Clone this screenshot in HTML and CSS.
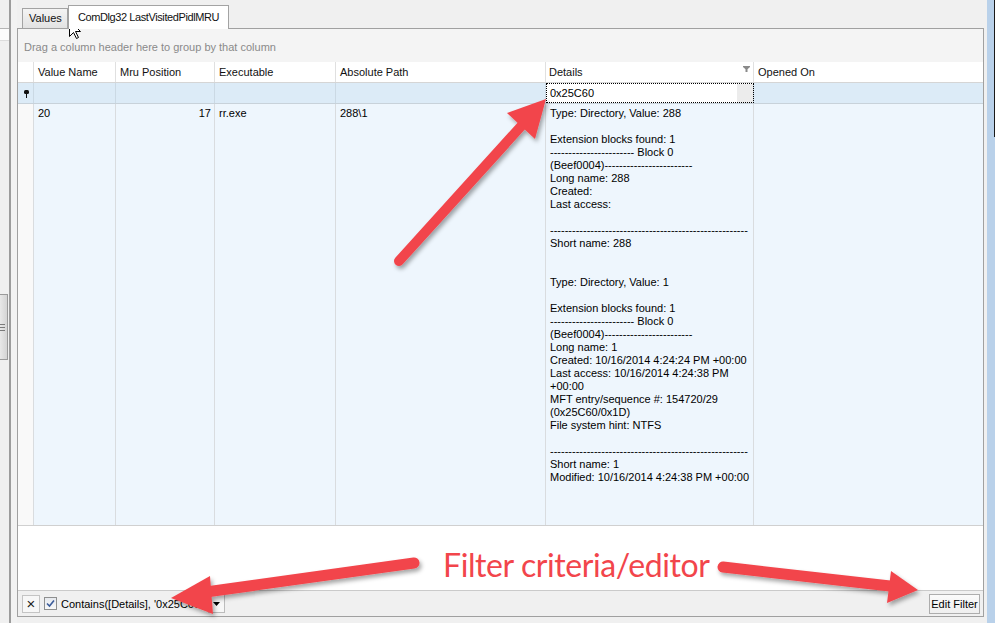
FILE: index.html
```html
<!DOCTYPE html>
<html>
<head>
<meta charset="utf-8">
<link rel="stylesheet" href="styles.css">
</head>
<body>
<div class="app">
  <div class="leftpane">
    <div class="lp-head"></div>
    <div class="lp-handle"><span></span><span></span><span></span></div>
  </div>
  <div class="splitter"></div>
  <div class="main">
    <div class="tabs">
      <div class="tab">Values</div>
      <div class="tab tab-active">ComDlg32 LastVisitedPidlMRU</div>
    </div>
    <div class="panel">
      <div class="grouppanel">Drag a column header here to group by that column</div>
      <div class="row row-head">
        <div class="cell"></div>
        <div class="cell">Value Name</div>
        <div class="cell">Mru Position</div>
        <div class="cell">Executable</div>
        <div class="cell">Absolute Path</div>
        <div class="cell cell-details-head"><span>Details</span>
          <svg class="funnel" width="7" height="6" viewBox="0 0 7 6"><path d="M0 0H7V1L4.5 3.2V6H2.5V3.2L0 1Z" fill="#8a8a8a"/></svg>
        </div>
        <div class="cell cell-last">Opened On</div>
      </div>
      <div class="row row-filter">
        <div class="cell cell-ind"><svg width="5" height="8" viewBox="0 0 5 8"><rect x="0" y="0" width="5" height="4" rx="1.5" fill="#111"/><rect x="2" y="3" width="1" height="5" fill="#111"/></svg></div>
        <div class="cell"></div>
        <div class="cell"></div>
        <div class="cell"></div>
        <div class="cell"></div>
        <div class="cell cell-editor"><span>0x25C60</span><div class="editor-btn"></div></div>
        <div class="cell cell-last"></div>
      </div>
      <div class="row row-data">
        <div class="cell cell-ind-data"></div>
        <div class="cell">20</div>
        <div class="cell cell-num">17</div>
        <div class="cell">rr.exe</div>
        <div class="cell">288\1</div>
        <div class="cell cell-details">Type: Directory, Value: 288

Extension blocks found: 1
----------------------- Block 0
(Beef0004)------------------------
Long name: 288
Created:
Last access:

------------------------------------------------------
Short name: 288


Type: Directory, Value: 1

Extension blocks found: 1
----------------------- Block 0
(Beef0004)------------------------
Long name: 1
Created: 10/16/2014 4:24:24 PM +00:00
Last access: 10/16/2014 4:24:38 PM
+00:00
MFT entry/sequence #: 154720/29
(0x25C60/0x1D)
File system hint: NTFS

------------------------------------------------------
Short name: 1
Modified: 10/16/2014 4:24:38 PM +00:00</div>
        <div class="cell cell-last"></div>
      </div>
      <div class="blank"></div>
      <div class="filterbar">
        <div class="fb-close">×</div>
        <div class="fb-check"><svg width="9" height="9" viewBox="0 0 9 9"><path d="M1 4.5L3.5 7L8 1.5" fill="none" stroke="#3b5c9a" stroke-width="1.6"/></svg></div>
        <div class="fb-text">Contains([Details], '0x25C60')</div>
        <div class="fb-drop"><svg width="7" height="4" viewBox="0 0 7 4"><path d="M0 0H7L3.5 4Z" fill="#000"/></svg></div>
        <div class="fb-edit">Edit Filter</div>
      </div>
    </div>
  </div>
  <div class="rightgap"></div>
  <div class="frame"></div>
</div>
<svg class="overlay" width="995" height="623" viewBox="0 0 995 623">
  <defs>
    <filter id="sh" x="-20%" y="-20%" width="140%" height="140%">
      <feDropShadow dx="2" dy="3" stdDeviation="2" flood-color="#000" flood-opacity="0.35"/>
    </filter>
  </defs>
  <g fill="#f2454b" stroke="#f2454b" filter="url(#sh)">
    <line x1="399" y1="261" x2="524" y2="123" stroke-width="10" stroke-linecap="round"/>
    <polygon points="546,99 535,139 507,113" stroke="none"/>
    <line x1="414" y1="563" x2="206" y2="592" stroke-width="11" stroke-linecap="round"/>
    <polygon points="171,598 210,576 213,614" stroke="none"/>
    <line x1="723" y1="567" x2="890" y2="586" stroke-width="11" stroke-linecap="round"/>
    <polygon points="918,590 891,571 887,603" stroke="none"/>
  </g>
  <text x="443" y="577" font-family="Lato, 'Open Sans', sans-serif" font-size="32" fill="#f2454b" textLength="267">Filter criteria/editor</text>
  <path d="M69.5 20.5V36.5L73.5 32.5L76.5 38.5L78.5 37.5L75.5 31.5H80.5Z" fill="#fff" stroke="#000" stroke-width="1" stroke-linejoin="round"/>
</svg>
</body>
</html>
```

FILE: styles.css
```css
* { box-sizing: border-box; }
body {
  margin: 0;
  width: 995px;
  height: 623px;
  overflow: hidden;
  background: #f0f0f0;
  font-family: "Liberation Sans", Arial, sans-serif;
  font-size: 11px;
  color: #000;
  position: relative;
}
.app { display: flex; height: 623px; }
.leftpane { width: 9px; display: flex; flex-direction: column; background: #f0f0f0; }
.lp-head { margin-top: 28px; height: 13px; background: #fcfcfc; border-top: 1px solid #b5b5b5; border-bottom: 1px solid #dcdcdc; }
.lp-handle {
  margin-top: 253px; height: 66px; width: 8px;
  border: 1px solid #9a9a9a; border-left: none;
  background: linear-gradient(90deg, #e8e8e8, #d4d4d4);
  display: flex; flex-direction: column; justify-content: center; gap: 2px;
}
.lp-handle span { display: block; width: 5px; height: 1px; background: #7a7a7a; }
.splitter { width: 8px; border-left: 2px solid #9c9c9c; background: #f2f2f2; }
.main { width: 967px; display: flex; flex-direction: column; padding-bottom: 6px; }
.tabs { height: 28px; display: flex; align-items: flex-end; padding-left: 5px; }
.tab {
  height: 20px; width: 46px;
  border: 1px solid #a3a3a3; border-bottom: none;
  background: linear-gradient(#f4f4f4, #e2e2e2);
  padding: 3px 0 0 6px; line-height: 13px; color: #111;
}
.tab-active {
  height: 24px; width: 161px; margin-bottom: -1px;
  position: relative; z-index: 1;
  background: #fff; text-align: center; padding: 5px 0 0;
  letter-spacing: -0.4px;
}
.panel { flex: 1; border: 1px solid #a0a0a0; background: #fff; display: flex; flex-direction: column; }
.grouppanel {
  height: 33px; background: #f4f4f4; color: #8a8a8a;
  display: flex; align-items: center; padding: 3px 0 0 6px;
}
.row { display: grid; grid-template-columns: 16px 82px 99px 121px 210px 208px 1fr; }
.cell { border-right: 1px solid #e0e0e0; padding-left: 4px; overflow: hidden; white-space: nowrap; }
.cell-last { border-right: none; }
.row-head { height: 21px; border-bottom: 1px solid #d5d5d5; background: #fff; }
.row-head .cell { line-height: 20px; color: #111; }
.cell-details-head { display: flex; align-items: flex-start; padding-left: 3px; }
.funnel { margin: 4px 3px 0 auto; }
.row-filter { height: 21px; background: #dcebf7; border-bottom: 1px solid #c8d2da; }
.row-filter .cell { border-right-color: #cbd9e4; line-height: 20px; }
.cell-ind { display: flex; align-items: center; padding-left: 6px; padding-top: 1px; }
.cell-editor {
  background: #fff; outline: 1px dotted #000; outline-offset: -1px;
  display: flex; padding-left: 4px;
}
.editor-btn { margin-left: auto; width: 16px; height: 19px; margin-top: 1px; background: #ececec; }
.row-data { height: 422px; background: #eef6fd; border-bottom: 1px solid #d0d0d0; }
.row-data .cell { border-right-color: #d9dcdf; padding-top: 3px; line-height: 13px; }
.row-data .cell.cell-last { border-right: none; }
.cell-ind-data { background: #f9f9f9; }
.row-data .cell-num { text-align: right; padding-right: 3px; }
.cell-details { white-space: pre; }
.blank { flex: 1; background: #fff; }
.filterbar {
  height: 26px; border-top: 1px solid #cacaca; background: #f0f0f0;
  display: flex; align-items: center; padding-left: 4px; padding-right: 3px;
}
.fb-close {
  width: 18px; height: 18px; border: 1px solid #c4c4c4; background: #f7f7f7;
  display: flex; align-items: center; justify-content: center;
  font-size: 15px; line-height: 1; color: #222;
}
.fb-check {
  width: 13px; height: 13px; margin-left: 4px; border: 1px solid #8e8f8f;
  background: linear-gradient(#e6e9ee, #f8f8f8);
  display: flex; align-items: center; justify-content: center;
}
.fb-text { width: 147px; margin-left: 4px; overflow: hidden; white-space: nowrap; }
.fb-drop {
  width: 17px; height: 19px; border: 1px solid #bcbcbc; background: #f7f7f7;
  display: flex; align-items: center; justify-content: center;
}
.fb-edit {
  margin-left: auto; width: 51px; height: 20px;
  border: 1px solid #adadad; background: linear-gradient(#fafafa, #efefef);
  display: flex; align-items: center; justify-content: center; color: #000;
}
.rightgap { width: 3px; background: #f0f0f0; }
.frame {
  width: 8px;
  background: linear-gradient(#1a1a1a, #1a1a1a) right top / 1px 137px no-repeat, #b9d1ea;
}
.overlay { position: absolute; left: 0; top: 0; pointer-events: none; }
```
